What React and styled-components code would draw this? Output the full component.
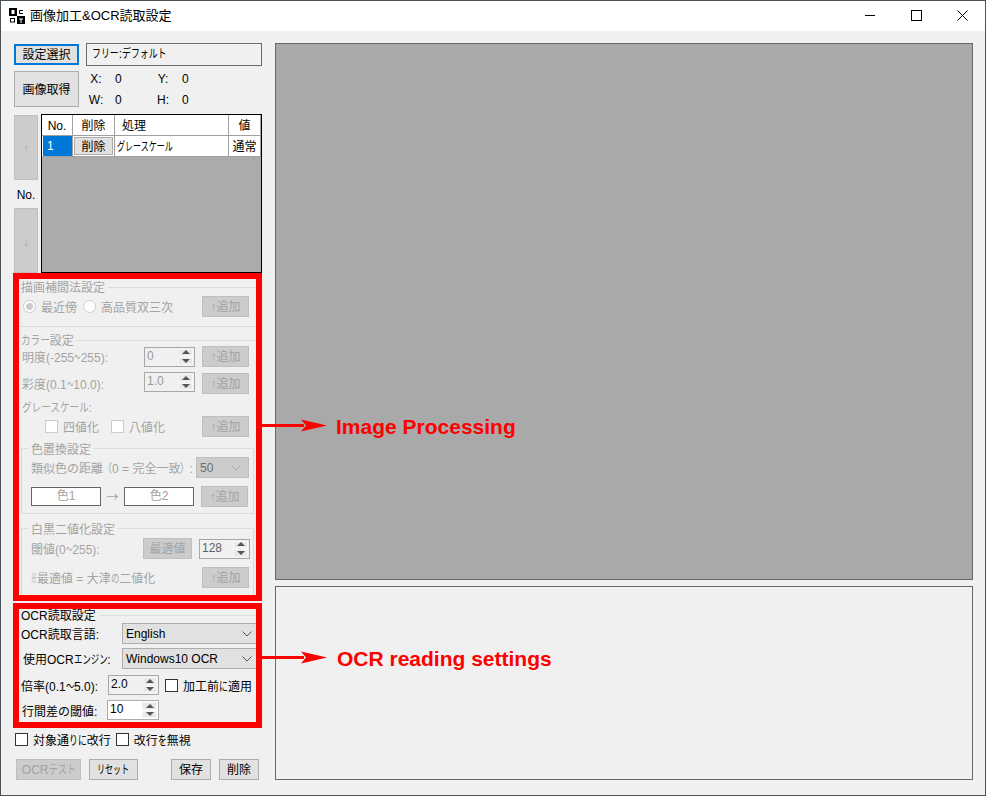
import React from 'react';
import styled, { createGlobalStyle } from 'styled-components';

const GlobalStyle = createGlobalStyle`
  html, body {
    margin: 0;
    padding: 0;
    background: #f0f0f0;
  }
  body {
    font-family: "Liberation Sans", "Noto Sans CJK JP", sans-serif;
    font-size: 12px;
    color: #000;
  }
  * {
    box-sizing: border-box;
  }
`;

const DISABLED_TEXT = '#a3a3a3';

const App = () => (
  <Window>
    <GlobalStyle />
    <TitleBar>
      <AppIcon />
      <TitleText>画像加工&amp;OCR読取設定</TitleText>
      <WindowButtons>
        <WindowButton>
          <svg width="10" height="10" viewBox="0 0 10 10">
            <path d="M0 5.5h10" stroke="#000" />
          </svg>
        </WindowButton>
        <WindowButton>
          <svg width="11" height="11" viewBox="0 0 11 11">
            <rect x=".5" y=".5" width="10" height="10" fill="none" stroke="#000" />
          </svg>
        </WindowButton>
        <WindowButton>
          <svg width="11" height="11" viewBox="0 0 11 11">
            <path d="M.5.5l10 10M10.5.5l-10 10" stroke="#000" fill="none" />
          </svg>
        </WindowButton>
      </WindowButtons>
    </TitleBar>

    <Content>
      <LeftColumn>
        <TopRow>
          <PrimaryButton>設定選択</PrimaryButton>
          <PresetBox>
            <Narrow $n={3}>フリー</Narrow>:<Narrow $n={5}>デフォルト</Narrow>
          </PresetBox>
        </TopRow>

        <CaptureRow>
          <CaptureButton>画像取得</CaptureButton>
          <CoordGrid>
            <CoordLabel>X:</CoordLabel>
            <CoordValue>0</CoordValue>
            <CoordLabel>Y:</CoordLabel>
            <CoordValue>0</CoordValue>
            <CoordLabel>W:</CoordLabel>
            <CoordValue>0</CoordValue>
            <CoordLabel>H:</CoordLabel>
            <CoordValue>0</CoordValue>
          </CoordGrid>
        </CaptureRow>

        <ListRow>
          <OrderColumn>
            <OrderButton>↑</OrderButton>
            <OrderLabel>No.</OrderLabel>
            <OrderButton>↓</OrderButton>
          </OrderColumn>
          <StepsGrid>
            <StepsTable>
              <HeadCell $center>No.</HeadCell>
              <HeadCell $center>削除</HeadCell>
              <HeadCell $pad={7}>処理</HeadCell>
              <HeadCell $center>値</HeadCell>
              <SelectedCell>1</SelectedCell>
              <ButtonCell>
                <CellButton>削除</CellButton>
              </ButtonCell>
              <HeadCell $pad={2}>
                <Narrow $n={7} $scale={0.67}>
                  グレースケール
                </Narrow>
              </HeadCell>
              <HeadCell $center>通常</HeadCell>
            </StepsTable>
          </StepsGrid>
        </ListRow>

        <ImagePanel>
          <Legend $disabled>
            <span>描画補間法設定</span>
          </Legend>
          <ImageRow $mt={3} $left={4}>
            <Radio type="radio" checked disabled readOnly />
            <OptionLabel $disabled>最近傍</OptionLabel>
            <Radio type="radio" disabled $gap={6} />
            <OptionLabel $disabled>高品質双三次</OptionLabel>
            <AddButton>↑追加</AddButton>
          </ImageRow>
          <Separator />
          <Legend $disabled $mt={7}>
            <span>
              <Narrow $n={3} $scale={0.8}>
                カラー
              </Narrow>
              設定
            </span>
          </Legend>
          <ImageRow $left={3}>
            <OptionLabel $disabled>
              明度(-255<Narrow $n={1} $scale={0.55}>～</Narrow>255):
            </OptionLabel>
            <SpinBox $auto $disabled>
              <SpinValue $color="#9a9a9a">0</SpinValue>
              <SpinButtons />
            </SpinBox>
            <AddButton $gap={7}>↑追加</AddButton>
          </ImageRow>
          <ImageRow $mt={6} $left={3}>
            <OptionLabel $disabled>
              彩度(0.1<Narrow $n={1} $scale={0.55}>～</Narrow>10.0):
            </OptionLabel>
            <SpinBox $auto $disabled $up>
              <SpinValue $color="#9a9a9a">1.0</SpinValue>
              <SpinButtons />
            </SpinBox>
            <AddButton $gap={7}>↑追加</AddButton>
          </ImageRow>
          <PlainLabel>
            <Narrow $n={7} $scale={0.8}>
              グレースケール
            </Narrow>
            :
          </PlainLabel>
          <ImageRow $left={26}>
            <Check type="checkbox" disabled />
            <OptionLabel $disabled>四値化</OptionLabel>
            <Check type="checkbox" disabled $gap={12} />
            <OptionLabel $disabled>八値化</OptionLabel>
            <AddButton>↑追加</AddButton>
          </ImageRow>

          <GroupBox $mt={4}>
            <GroupLegend>色置換設定</GroupLegend>
            <GroupRow $mt={2} $right={4}>
              <OptionLabel $disabled>
                類似色の距離<Narrow $n={1} $scale={0.75}>（</Narrow>0 = 完全一致
                <Narrow $n={1} $scale={0.75}>）</Narrow>:
              </OptionLabel>
              <ComboBox $disabled $width={53}>
                <span>50</span>
                <Chevron $disabled />
              </ComboBox>
            </GroupRow>
            <GroupRow $mt={8} $right={5}>
              <ColorSwatch>色1</ColorSwatch>
              <ColorArrow>→</ColorArrow>
              <ColorSwatch>色2</ColorSwatch>
              <AddButton $gap={7}>↑追加</AddButton>
            </GroupRow>
          </GroupBox>

          <GroupBox $mt={7} $open>
            <GroupLegend>白黒二値化設定</GroupLegend>
            <GroupRow $mt={3} $right={3}>
              <OptionLabel $disabled>
                閾値(0<Narrow $n={1} $scale={0.55}>～</Narrow>255):
              </OptionLabel>
              <BestButton>最適値</BestButton>
              <SpinBox $disabled $gap={7}>
                <SpinValue $color="#5f5f5f">128</SpinValue>
                <SpinButtons />
              </SpinBox>
            </GroupRow>
            <GroupRow $mt={8} $right={4}>
              <OptionLabel $disabled>
                <Narrow $n={1} $scale={0.5}>※</Narrow>最適値 = 大津
                <Narrow $n={1} $scale={0.7}>の</Narrow>二値化
              </OptionLabel>
              <AddButton>↑追加</AddButton>
            </GroupRow>
          </GroupBox>
        </ImagePanel>

        <OcrPanel>
          <Legend $mt={0}>
            <span>OCR読取設定</span>
          </Legend>
          <OcrRow $mt={2} $left={2}>
            <FieldLabel $width={101}>OCR読取言語:</FieldLabel>
            <ComboBox $width={138}>
              <span>English</span>
              <Chevron />
            </ComboBox>
          </OcrRow>
          <OcrRow $mt={4} $left={4}>
            <FieldLabel $width={99}>
              使用OCR<Narrow $n={4} $scale={0.7}>エンジン</Narrow>:
            </FieldLabel>
            <ComboBox $width={138}>
              <span>Windows10 OCR</span>
              <Chevron />
            </ComboBox>
          </OcrRow>
          <OcrRow $mt={6} $left={2} $height={20}>
            <FieldLabel $width={87}>
              倍率(0.1<Narrow $n={1} $scale={0.7}>～</Narrow>5.0):
            </FieldLabel>
            <SpinBox $disabled>
              <SpinValue $color="#000">2.0</SpinValue>
              <SpinButtons />
            </SpinBox>
            <Check type="checkbox" $gap={6} />
            <OptionLabel>
              加工前<Narrow $n={1}>に</Narrow>適用
            </OptionLabel>
          </OcrRow>
          <OcrRow $mt={5} $left={3} $height={20}>
            <FieldLabel $width={85}>行間差の閾値:</FieldLabel>
            <SpinBox $wide>
              <SpinValue $color="#000">10</SpinValue>
              <SpinButtons />
            </SpinBox>
          </OcrRow>
        </OcrPanel>

        <OptionRow>
          <Check type="checkbox" />
          <OptionLabel>
            対象通<Narrow $n={2}>りに</Narrow>改行
          </OptionLabel>
          <Check type="checkbox" $gap={5} />
          <OptionLabel>
            改行<Narrow $n={1}>を</Narrow>無視
          </OptionLabel>
        </OptionRow>

        <ActionRow>
          <ActionButton $width={65} $disabled>
            OCR<Narrow $n={3}>テスト</Narrow>
          </ActionButton>
          <ActionButton $width={49} $gap={8}>
            <Narrow $n={4} $scale={0.67}>
              リセット
            </Narrow>
          </ActionButton>
          <ActionButton $width={40} $gap={33}>
            保存
          </ActionButton>
          <ActionButton $width={40} $gap={8}>
            削除
          </ActionButton>
        </ActionRow>
      </LeftColumn>

      <RightColumn>
        <PreviewPanel />
        <ResultPanel />
      </RightColumn>
    </Content>

    <Callout $top={417}>
      <CalloutArrow />
      <CalloutText>Image Processing</CalloutText>
    </Callout>
    <Callout $top={649}>
      <CalloutArrow />
      <CalloutText $offset={9}>OCR reading settings</CalloutText>
    </Callout>
  </Window>
);

export default App;

const AppIcon = () => (
  <svg width="16" height="16" viewBox="0 0 16 16">
    <rect x="0" y="0" width="8" height="8" fill="#000" />
    <rect x="2.5" y="2" width="3" height="4" fill="#fff" />
    <path d="M14 2.5h-3.5v3h3.5" fill="none" stroke="#000" />
    <rect x="1.5" y="10.5" width="4" height="3.5" fill="none" stroke="#000" />
    <rect x="8" y="8" width="8" height="8" fill="#000" />
    <path d="M10 11h4M12 11v4" stroke="#fff" />
  </svg>
);

const SpinButtons = () => (
  <SpinColumn>
    <SpinHalf>
      <TriangleUp />
    </SpinHalf>
    <SpinHalf>
      <TriangleDown />
    </SpinHalf>
  </SpinColumn>
);

const Chevron = ({ $disabled }) => (
  <ChevronIcon width="10" height="6" viewBox="0 0 10 6">
    <path d="M.5.5L5 5 9.5.5" fill="none" stroke={$disabled ? '#a8a8a8' : '#555'} />
  </ChevronIcon>
);

const CalloutArrow = () => (
  <svg width="66" height="15" viewBox="0 0 66 15">
    <path d="M0 6h42v3H0z" fill="#f00" />
    <path d="M39 1.5l26 6-26 6 5-6z" fill="#f00" />
  </svg>
);

const Window = styled.div`
  position: relative;
  width: 986px;
  height: 796px;
  border: 1px solid #4a5259;
  background: #f0f0f0;
  overflow: hidden;
`;

const TitleBar = styled.header`
  display: flex;
  align-items: center;
  height: 30px;
  padding-left: 8px;
  background: #fff;
`;

const TitleText = styled.h1`
  margin: 0 0 0 5px;
  font-size: 13px;
  font-weight: 400;
  line-height: 30px;
  color: #000;
`;

const WindowButtons = styled.div`
  display: flex;
  align-self: flex-start;
  margin-left: auto;
`;

const WindowButton = styled.div`
  display: flex;
  align-items: center;
  justify-content: center;
  width: 46px;
  height: 28px;
`;

const Content = styled.main`
  display: flex;
  padding: 12px 12px 0 12px;
`;

const LeftColumn = styled.section`
  display: flex;
  flex-direction: column;
  flex: none;
  width: 249px;
`;

const RightColumn = styled.section`
  display: flex;
  flex-direction: column;
  gap: 6px;
  width: 698px;
  margin-left: 13px;
`;

const PreviewPanel = styled.div`
  height: 537px;
  border: 1px solid #696969;
  background: #a9a9a9;
`;

const ResultPanel = styled.div`
  height: 194px;
  border: 1px solid #696969;
  background: #f0f0f0;
`;

// Meiryo UI draws kana and some symbols much narrower than a full em
const Narrow = styled.span`
  display: inline-block;
  margin-right: ${({ $n, $scale = 0.74 }) => -(1 - $scale) * 12 * $n}px;
  transform: scaleX(${({ $scale = 0.74 }) => $scale});
  transform-origin: 0 50%;
  white-space: nowrap;
`;

const buttonBase = `
  display: flex;
  align-items: center;
  justify-content: center;
  padding: 1px 0 0;
  font: inherit;
  line-height: 1;
  white-space: nowrap;
`;

const TopRow = styled.div`
  display: flex;
  align-items: center;
  height: 23px;
  padding-left: 1px;
`;

const PrimaryButton = styled.button`
  ${buttonBase}
  width: 65px;
  height: 21px;
  border: 2px solid #0078d7;
  background: #e1e1e1;
  color: #000;
`;

const PresetBox = styled.div`
  width: 176px;
  height: 23px;
  margin-left: 7px;
  padding-left: 5px;
  border: 1px solid #6b6b6b;
  background: #f0f0f0;
  line-height: 21px;
`;

const CaptureRow = styled.div`
  display: flex;
  align-items: center;
  height: 36px;
  margin-top: 5px;
  padding-left: 1px;
`;

const CaptureButton = styled.button`
  ${buttonBase}
  width: 65px;
  height: 36px;
  border: 1px solid #adadad;
  background: #e1e1e1;
  color: #000;
`;

const CoordGrid = styled.div`
  display: grid;
  grid-template-columns: 20px 47px 20px 47px;
  grid-auto-rows: 21px;
  align-items: center;
  margin-left: 7px;
`;

const CoordLabel = styled.span`
  text-align: center;
`;

const CoordValue = styled.span`
  padding-left: 9px;
`;

const ListRow = styled.div`
  display: flex;
  height: 159px;
  margin-top: 7px;
  padding-left: 1px;
`;

const OrderColumn = styled.div`
  display: flex;
  flex-direction: column;
  width: 24px;
  padding-top: 1px;
`;

const OrderButton = styled.div`
  display: flex;
  flex: none;
  align-items: center;
  justify-content: center;
  height: 65px;
  padding-top: 3px;
  border: 1px solid #bfbfbf;
  background: #cccccc;
  color: #a8a8a8;
`;

const OrderLabel = styled.div`
  height: 28px;
  line-height: 30px;
  text-align: center;
`;

const StepsGrid = styled.div`
  width: 221px;
  height: 159px;
  margin-left: 3px;
  border: 1px solid #000;
  background: #ababab;
`;

const StepsTable = styled.div`
  display: grid;
  grid-template-columns: 31px 42px 114px 32px;
  grid-auto-rows: 21px;
`;

const HeadCell = styled.div`
  padding-left: ${({ $pad = 0 }) => $pad}px;
  border-right: 1px solid #a0a0a0;
  border-bottom: 1px solid #a0a0a0;
  background: #fff;
  line-height: 22px;
  text-align: ${({ $center }) => ($center ? 'center' : 'left')};
`;

const SelectedCell = styled.div`
  padding-left: 4px;
  border-right: 1px solid #a0a0a0;
  border-bottom: 1px solid #a0a0a0;
  border-left: 1px solid #fff;
  background: #0078d7;
  color: #fff;
  line-height: 21px;
`;

const ButtonCell = styled.div`
  padding: 1px;
  border-right: 1px solid #a0a0a0;
  border-bottom: 1px solid #a0a0a0;
  background: #fff;
`;

const CellButton = styled.button`
  ${buttonBase}
  width: 39px;
  height: 18px;
  border: 1px solid #adadad;
  background: #e1e1e1;
  color: #000;
`;

const ImagePanel = styled.section`
  display: flex;
  flex-direction: column;
  height: 328px;
  border: 6px solid #f00;
  background: #f0f0f0;
  overflow: hidden;
`;

const OcrPanel = styled.section`
  display: flex;
  flex-direction: column;
  height: 125px;
  margin-top: 2px;
  border: 6px solid #f00;
  background: #f0f0f0;
  overflow: hidden;
`;

const Legend = styled.div`
  display: flex;
  align-items: center;
  flex: none;
  height: 12px;
  margin-top: ${({ $mt = 2 }) => $mt}px;
  padding-left: 2px;
  color: ${({ $disabled }) => ($disabled ? DISABLED_TEXT : '#000')};
  line-height: 12px;
  white-space: nowrap;

  & > span {
    margin-top: 2px;
  }

  &::after {
    content: '';
    flex: 1;
    height: 1px;
    margin-left: 3px;
    background: #dcdcdc;
  }
`;

const Separator = styled.div`
  flex: none;
  height: 1px;
  margin-top: 9px;
  background: #dcdcdc;
`;

const ImageRow = styled.div`
  display: flex;
  flex: none;
  align-items: center;
  height: 21px;
  margin-top: ${({ $mt = 0 }) => $mt}px;
  padding: 0 7px 0 ${({ $left = 0 }) => $left}px;
`;

const OcrRow = styled.div`
  display: flex;
  flex: none;
  align-items: center;
  height: ${({ $height = 21 }) => $height}px;
  margin-top: ${({ $mt = 0 }) => $mt}px;
  padding-left: ${({ $left = 0 }) => $left}px;
`;

const GroupRow = styled.div`
  display: flex;
  align-items: center;
  justify-content: space-between;
  height: 21px;
  margin-top: ${({ $mt = 0 }) => $mt}px;
  padding: 0 ${({ $right = 0 }) => $right}px 0 9px;
`;

const FieldLabel = styled.span`
  flex: none;
  width: ${({ $width }) => $width}px;
  white-space: nowrap;
`;

const OptionLabel = styled.span`
  padding-left: 5px;
  color: ${({ $disabled }) => ($disabled ? DISABLED_TEXT : '#000')};
  white-space: nowrap;

  &:first-child {
    padding-left: 0;
  }
`;

const PlainLabel = styled.div`
  flex: none;
  height: 16px;
  margin-top: 6px;
  padding-left: 3px;
  color: ${DISABLED_TEXT};
  line-height: 16px;
`;

const AddButton = styled.button`
  ${buttonBase}
  flex: none;
  width: 47px;
  height: 21px;
  margin-left: ${({ $gap }) => ($gap ? `${$gap}px` : 'auto')};
  border: 1px solid #bfbfbf;
  background: #cccccc;
  color: ${DISABLED_TEXT};
`;

const BestButton = styled(AddButton)`
  width: 49px;
  margin-left: auto;
`;

const Check = styled.input`
  appearance: none;
  flex: none;
  width: 13px;
  height: 13px;
  margin: 0 0 0 ${({ $gap = 0 }) => $gap}px;
  border: 1px solid ${({ disabled }) => (disabled ? '#cccccc' : '#333')};
  background: #fff;
  border-radius: 0;
`;

const Radio = styled.input`
  appearance: none;
  position: relative;
  flex: none;
  width: 13px;
  height: 13px;
  margin: 0 0 0 ${({ $gap = 0 }) => $gap}px;
  border: 1px solid #cccccc;
  border-radius: 50%;
  background: #fff;

  &:checked::after {
    content: '';
    position: absolute;
    inset: 2px;
    border-radius: 50%;
    background: #cccccc;
  }
`;

const SpinBox = styled.div`
  display: flex;
  flex: none;
  width: ${({ $wide }) => ($wide ? 52 : 51)}px;
  height: 20px;
  margin-top: ${({ $up }) => ($up ? -3 : 0)}px;
  margin-left: ${({ $auto, $gap = 0 }) => ($auto ? 'auto' : `${$gap}px`)};
  padding: 1px;
  border: 1px solid ${({ $disabled }) => ($disabled ? '#a8a8a8' : '#adadad')};
  background: ${({ $disabled }) => ($disabled ? '#f0f0f0' : '#fff')};
`;

const SpinValue = styled.span`
  flex: 1;
  padding-left: 1px;
  color: ${({ $color }) => $color};
  line-height: 15px;
`;

const SpinColumn = styled.div`
  display: flex;
  flex: none;
  flex-direction: column;
  gap: 1px;
  width: 15px;
`;

const SpinHalf = styled.div`
  display: flex;
  flex: 1;
  align-items: center;
  justify-content: center;
  background: #e9e9e9;
  border: 1px solid #f6f6f6;
`;

const TriangleUp = styled.span`
  border-right: 4px solid transparent;
  border-bottom: 4px solid #555;
  border-left: 4px solid transparent;
`;

const TriangleDown = styled.span`
  border-top: 4px solid #555;
  border-right: 4px solid transparent;
  border-left: 4px solid transparent;
`;

const ComboBox = styled.div`
  display: flex;
  flex: none;
  align-items: center;
  justify-content: space-between;
  width: ${({ $width }) => $width}px;
  height: 21px;
  padding: 0 7px 0 3px;
  border: 1px solid ${({ $disabled }) => ($disabled ? '#bfbfbf' : '#adadad')};
  background: ${({ $disabled }) => ($disabled ? '#cccccc' : '#e1e1e1')};
  color: ${({ $disabled }) => ($disabled ? '#6d6d6d' : '#000')};
`;

const ChevronIcon = styled.svg`
  flex: none;
`;

const GroupBox = styled.fieldset`
  flex: none;
  width: 233px;
  margin: ${({ $mt = 0 }) => $mt}px 0 0 2px;
  padding: 0 0 ${({ $open }) => ($open ? 30 : 6)}px;
  border: 1px solid #dcdcdc;
  min-inline-size: 0;
`;

const GroupLegend = styled.legend`
  height: 14px;
  margin-left: 7px;
  padding: 0 2px;
  color: ${DISABLED_TEXT};
  line-height: 18px;
`;

const ColorSwatch = styled.div`
  flex: none;
  width: 70px;
  height: 19px;
  border: 1px solid #666;
  background: #fff;
  color: ${DISABLED_TEXT};
  line-height: 17px;
  text-align: center;
`;

const ColorArrow = styled.span`
  flex: none;
  width: 23px;
  color: ${DISABLED_TEXT};
  font-family: "Noto Sans CJK JP", sans-serif;
  text-align: center;
`;

const OptionRow = styled.div`
  display: flex;
  align-items: center;
  height: 13px;
  margin-top: 5px;
  padding-left: 2px;
`;

const ActionRow = styled.div`
  display: flex;
  margin-top: 13px;
  padding-left: 3px;
`;

const ActionButton = styled.button`
  ${buttonBase}
  width: ${({ $width }) => $width}px;
  height: 21px;
  margin-left: ${({ $gap = 0 }) => $gap}px;
  border: 1px solid ${({ $disabled }) => ($disabled ? '#bfbfbf' : '#adadad')};
  background: ${({ $disabled }) => ($disabled ? '#cccccc' : '#e1e1e1')};
  color: ${({ $disabled }) => ($disabled ? DISABLED_TEXT : '#000')};
`;

const Callout = styled.div`
  position: absolute;
  top: ${({ $top }) => $top}px;
  left: 261px;
  display: flex;
  align-items: center;
  height: 15px;
`;

const CalloutText = styled.span`
  margin-top: 2px;
  margin-left: ${({ $offset = 8 }) => $offset}px;
  color: #f00;
  font-family: "Liberation Sans", Arial, sans-serif;
  font-size: 21px;
  font-weight: 700;
  white-space: nowrap;
`;
